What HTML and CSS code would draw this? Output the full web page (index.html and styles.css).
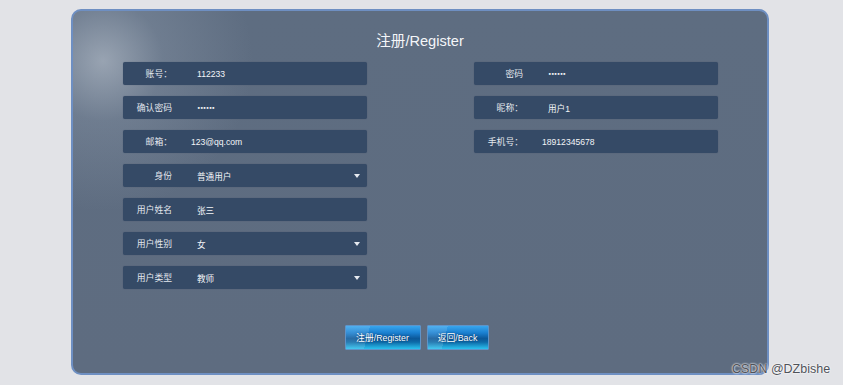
FILE: index.html
```html
<!DOCTYPE html>
<html lang="zh">
<head>
    <meta charset="UTF-8">
    <meta name="viewport" content="width=device-width, initial-scale=1.0">
    <title>注册/Register</title>
    <link rel="stylesheet" href="styles.css">
</head>
<body>
    <div class="card">
        <h1 class="title">注册/Register</h1>

        <div class="fields">
            <div class="col">
                <div class="row"><span class="label">账号：</span><span class="value">112233</span></div>
                <div class="row"><span class="label">确认密码</span><span class="value dots">••••••</span></div>
                <div class="row row-short"><span class="label">邮箱：</span><span class="value">123@qq.com</span></div>
                <div class="row select"><span class="label">身份</span><span class="value">普通用户</span><span class="arrow"></span></div>
                <div class="row"><span class="label">用户姓名</span><span class="value">张三</span></div>
                <div class="row select"><span class="label">用户性别</span><span class="value">女</span><span class="arrow"></span></div>
                <div class="row select"><span class="label">用户类型</span><span class="value">教师</span><span class="arrow"></span></div>
            </div>
            <div class="col">
                <div class="row"><span class="label">密码</span><span class="value dots">••••••</span></div>
                <div class="row"><span class="label">昵称：</span><span class="value">用户1</span></div>
                <div class="row row-short"><span class="label">手机号：</span><span class="value">18912345678</span></div>
            </div>
        </div>

        <div class="actions">
            <button class="btn btn-register">注册/Register</button>
            <button class="btn btn-back">返回/Back</button>
        </div>
    </div>

    <div class="watermark">CSDN @DZbishe</div>
</body>
</html>
```

FILE: styles.css
```css
body { margin: 0; height: 385px; background: #e2e3e7; font-family: "Liberation Sans", "Noto Sans CJK SC", sans-serif; overflow: hidden; position: relative; }

.card { box-sizing: border-box; width: 698px; height: 366px; margin: 9px 0 0 71px; border: 2px solid #6e8fc2; border-radius: 10px; background: radial-gradient(circle at 30px 50px, rgba(200, 208, 218, 0.55) 0, rgba(160, 172, 188, 0.25) 60px, rgba(94, 109, 129, 0) 150px), linear-gradient(#5e6d81, #5e6c80); }

.title { margin: 0; padding-top: 20px; height: 31px; text-align: center; font-size: 14.6px; font-weight: normal; color: #f4f6f9; line-height: 20px; }

.fields { display: flex; justify-content: space-between; padding: 0 49px 0 50px; }
.col { display: flex; flex-direction: column; gap: 11px; width: 244px; }

.row { display: flex; align-items: center; height: 23px; background: #354a66; border-radius: 2px; box-shadow: 0 0 1px rgba(30, 45, 70, 0.4); color: #eef1f5; font-size: 8.6px; }
.label { width: 49px; text-align: right; color: #e4e8ee; font-size: 8.8px; }
.value { margin-left: 25px; color: #f3f5f8; }
.row-short .value { margin-left: 19px; }
.dots { font-family: "DejaVu Sans", sans-serif; font-size: 5.5px; font-weight: bold; letter-spacing: -0.6px; }

.select { position: relative; }
.arrow { position: absolute; right: 7px; top: 10px; width: 0; height: 0; border-left: 3.5px solid transparent; border-right: 3.5px solid transparent; border-top: 4px solid #e6eaf0; }

.actions { display: flex; justify-content: center; gap: 6px; margin-top: 36px; padding-right: 7px; }
.btn { height: 25px; padding: 0; border: 1px solid #5f93c8; border-radius: 1px; color: #fff; font-family: "Liberation Sans", "Noto Sans CJK SC", sans-serif; font-size: 8.8px; text-shadow: 0 0 2px rgba(0, 40, 90, 0.8); cursor: pointer; background: linear-gradient(105deg, rgba(255, 255, 255, 0.12) 0, rgba(255, 255, 255, 0.12) 30%, rgba(255, 255, 255, 0) 30%), linear-gradient(#38a6ee 0, #1a7fd0 30%, #0b5798 55%, #0d6aa8 70%, #2bc2f0 100%); }
.btn-register { width: 76px; }
.btn-back { width: 62px; }

.watermark { position: absolute; left: 732px; top: 362px; font-size: 12.5px; color: #4f5259; text-shadow: 0 0 2px #fff, 0 0 2px #fff; }
```
